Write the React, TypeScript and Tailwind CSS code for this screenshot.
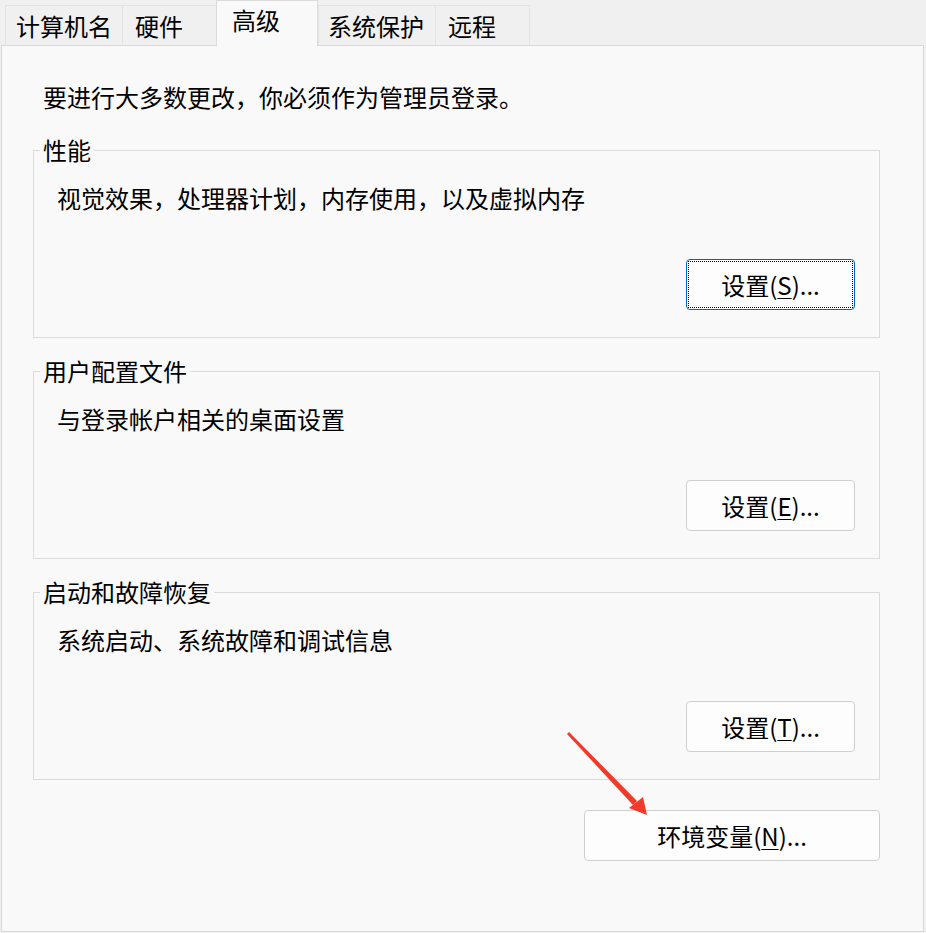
import React from "react";

const font = { fontFamily: '"Microsoft YaHei", "Noto Sans CJK SC", "Noto Sans", sans-serif' };

function Tab({ label, w, pl, selected }: { label: string; w: string; pl: string; selected?: boolean }) {
  if (selected) {
    return (
      <div
        className={`${w} ${pl} h-[46px] -mb-px relative z-10 bg-[#f9f9f9] border-t border-l border-r border-[#dcdcdc] flex items-start pt-[3px] leading-[32px] text-[24px] text-black`}
      >
        {label}
      </div>
    );
  }
  return (
    <div
      className={`${w} ${pl} h-[40px] bg-[#f0f0f0] border-t border-l border-[#e3e3e3] flex items-start pt-[4px] leading-[32px] text-[24px] text-black`}
    >
      {label}
    </div>
  );
}

function Btn({ pre, key1, focused, w }: { pre: string; key1: string; focused?: boolean; w: string }) {
  if (focused) {
    return (
      <div className={`${w} h-[51px] rounded-[4px] border border-[#0067c0] bg-[#fdfdfd] p-px`}>
        <div className="w-full h-full border border-dotted border-black flex items-center justify-center text-[24px] leading-[32px] text-black">
          <span>
            {pre}(<span className="underline underline-offset-[3px] decoration-1">{key1}</span>)...
          </span>
        </div>
      </div>
    );
  }
  return (
    <div className={`${w} h-[51px] rounded-[4px] border border-[#d0d0d0] bg-[#fdfdfd] flex items-center justify-center text-[24px] leading-[32px] text-black`}>
      <span>
        {pre}(<span className="underline underline-offset-[3px] decoration-1">{key1}</span>)...
      </span>
    </div>
  );
}

function Group({ title, desc, btn, mt }: { title: string; desc: string; btn: React.ReactNode; mt: string }) {
  return (
    <fieldset className={`${mt} ml-[31px] w-[847px] border border-[#dcdcdc] p-0 m-0`}>
      <legend className="ml-[6px] px-[3px] text-[24px] leading-[32px] text-black">{title}</legend>
      <div className="pl-[23px] mt-[16px] text-[24px] leading-[32px] text-black">{desc}</div>
      <div className="flex justify-end pr-[24px] mt-[45px] pb-[27px]">{btn}</div>
    </fieldset>
  );
}

export default function App() {
  return (
    <div className="relative w-[926px] h-[933px] bg-[#f0f0f0] overflow-hidden" style={font}>
      <div className="flex items-end pl-[5px] h-[45px]">
        <Tab label="计算机名" w="w-[117px]" pl="pl-[10px]" />
        <Tab label="硬件" w="w-[94px]" pl="pl-[12px]" />
        <Tab label="高级" w="w-[102px]" pl="pl-[15px]" selected />
        <Tab label="系统保护" w="w-[117px]" pl="pl-[9px]" />
        <div className="border-r border-[#e3e3e3]">
          <Tab label="远程" w="w-[94px]" pl="pl-[12px]" />
        </div>
      </div>
      <div className="ml-px w-[923px] h-[887px] bg-[#f9f9f9] border border-[#d9d9d9] flex flex-col">
        <div className="pl-[41px] pt-[35px] text-[24px] leading-[32px] text-black">
          要进行大多数更改，你必须作为管理员登录。
        </div>
        <Group
          mt="mt-[21px]"
          title="性能"
          desc="视觉效果，处理器计划，内存使用，以及虚拟内存"
          btn={<Btn pre="设置" key1="S" focused w="w-[169px]" />}
        />
        <Group
          mt="mt-[17px]"
          title="用户配置文件"
          desc="与登录帐户相关的桌面设置"
          btn={<Btn pre="设置" key1="E" w="w-[169px]" />}
        />
        <Group
          mt="mt-[17px]"
          title="启动和故障恢复"
          desc="系统启动、系统故障和调试信息"
          btn={<Btn pre="设置" key1="T" w="w-[169px]" />}
        />
        <div className="ml-[31px] w-[847px] flex justify-end mt-[30px]">
          <Btn pre="环境变量" key1="N" w="w-[296px]" />
        </div>
      </div>
      <svg className="absolute left-0 top-0 pointer-events-none" width="926" height="933">
        <polygon points="567,734 569,732 637,801 633,805" fill="#f23a2a" />
        <polygon points="647,815 629,808 643,797" fill="#f23a2a" />
      </svg>
    </div>
  );
}
